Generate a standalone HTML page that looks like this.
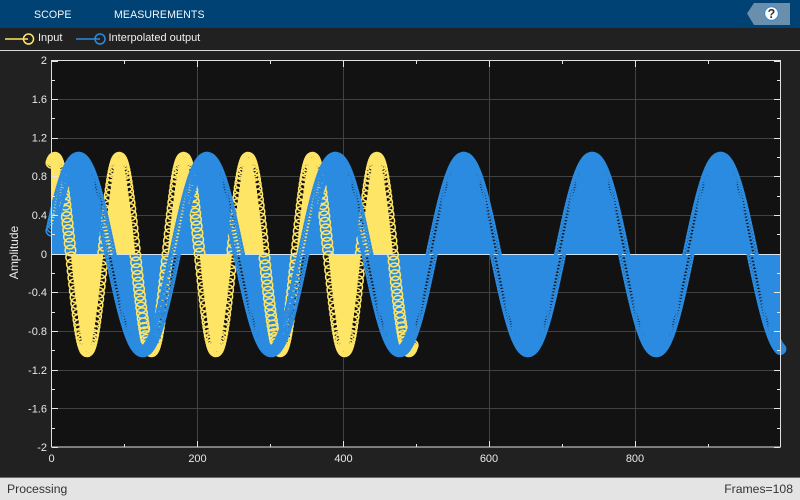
<!DOCTYPE html>
<html lang="en">
<head>
<meta charset="utf-8">
<title>Scope</title>
<style>
html,body{margin:0;padding:0;background:#212121;}
body{width:800px;height:500px;overflow:hidden;position:relative;font-family:"Liberation Sans",sans-serif;}
.top{position:absolute;left:0;top:0;width:800px;height:28px;background:#004274;color:#f2f6fa;font-size:10.6px;}
.top span{position:absolute;top:9px;letter-spacing:.1px;}
.leg{position:absolute;top:32px;color:#f0f0f0;font-size:11px;}
.sep{position:absolute;left:0;top:50px;width:800px;height:1px;background:#d8d8d8;}
.status{position:absolute;left:0;top:477px;width:800px;height:23px;background:#e4e4e4;border-top:1px solid #6a6a6a;box-sizing:border-box;color:#333;font-size:12.2px;}
.status span{position:absolute;top:4px;}
svg{position:absolute;left:0;top:0;}
#data{filter:blur(0.3px);}
</style>
</head>
<body>
<div class="top"><span style="left:34px">SCOPE</span><span style="left:114px">MEASUREMENTS</span></div>
<div class="leg" style="left:38px">Input</div>
<div class="leg" style="left:108.5px">Interpolated output</div>
<div class="sep"></div>
<svg width="800" height="500" viewBox="0 0 800 500" xmlns="http://www.w3.org/2000/svg" font-family="Liberation Sans, sans-serif">
  <polygon points="747,13.5 754,3 790,3 790,25 754,25" fill="#6a8fad"/>
  <circle cx="771.5" cy="13.5" r="6.8" fill="#fff" stroke="#2a8be0" stroke-width="1"/>
  <text x="771.5" y="18" font-size="12.5" font-weight="bold" text-anchor="middle" fill="#333">?</text>

  <path d="M5 39H28" stroke="#ffe566" stroke-width="1.5" fill="none"/>
  <circle cx="28.5" cy="39" r="5" fill="none" stroke="#ffe566" stroke-width="1.5"/>
  <path d="M76 39H100" stroke="#2a8be0" stroke-width="1.5" fill="none"/>
  <circle cx="100" cy="39" r="5" fill="none" stroke="#2a8be0" stroke-width="1.5"/>

  <rect x="51.5" y="60.5" width="729" height="386.5" fill="#121212"/>
  <path id="grid" d="" stroke="#424242" stroke-width="1" fill="none"/>

  <g id="data">
    <path id="ys" d="" stroke="#ffe566" stroke-width="1" fill="none"/>
    <path id="bs" d="" stroke="#2a8be0" stroke-width="1" fill="none"/>
    <path d="M51 254.5H781" stroke="#cfe4f7" stroke-width="1" fill="none"/>
    <path id="yr" d="" stroke="#ffe566" stroke-width="1.5" fill="none"/>
    <path id="br" d="" stroke="#2a8be0" stroke-width="1.6" fill="none"/>
  </g>

  <path id="ticks" d="" stroke="#e6e6e6" stroke-width="1" fill="none"/>
  <rect x="51.5" y="60.5" width="729" height="386.5" fill="none" stroke="#e0e0e0" stroke-width="1"/>

  <g font-size="11" fill="#e8e8e8" text-anchor="end">
    <text x="47" y="64">2</text>
    <text x="47" y="103">1.6</text>
    <text x="47" y="141.5">1.2</text>
    <text x="47" y="180">0.8</text>
    <text x="47" y="219">0.4</text>
    <text x="47" y="258">0</text>
    <text x="47" y="296">-0.4</text>
    <text x="47" y="335">-0.8</text>
    <text x="47" y="374">-1.2</text>
    <text x="47" y="412.5">-1.6</text>
    <text x="47" y="451">-2</text>
  </g>
  <g font-size="11" fill="#e8e8e8" text-anchor="middle">
    <text x="51.5" y="462">0</text>
    <text x="197.5" y="462">200</text>
    <text x="343.5" y="462">400</text>
    <text x="489" y="462">600</text>
    <text x="635" y="462">800</text>
  </g>
  <text transform="translate(18,252.5) rotate(-90)" font-size="12" fill="#e8e8e8" text-anchor="middle">Amplitude</text>
</svg>
<div class="status"><span style="left:7px">Processing</span><span style="right:7px">Frames=108</span></div>
<script>
(function(){
  var X0=51.5,DX=0.7295,Y0=254.5,AMP=96.7,R=5.3;
  function circ(x,y){return 'M'+(x-R).toFixed(2)+' '+y.toFixed(2)+'a'+R+' '+R+' 0 1 0 '+(2*R)+' 0a'+R+' '+R+' 0 1 0 '+(-2*R)+' 0';}
  function series(n,f,sid,rid){
    var s='',r='';
    for(var i=0;i<n;i++){
      var x=X0+i*DX,y=Y0-AMP*f(x);
      s+='M'+x.toFixed(2)+' '+Y0+'V'+y.toFixed(2);
      r+=circ(x,y);
    }
    document.getElementById(sid).setAttribute('d',s);
    document.getElementById(rid).setAttribute('d',r);
  }
  series(496,function(x){return -Math.cos(2*Math.PI*(x-87)/64.4);},'ys','yr');
  series(1000,function(x){return Math.cos(2*Math.PI*(x-78.5)/128.4);},'bs','br');
  var g='',t='',i,p;
  for(i=0;i<=10;i++){
    p=(60.5+i*38.65).toFixed(1);
    p=Math.round(p)+.5;
    if(i>0&&i<10)g+='M52 '+p+'H780';
    t+='M52 '+p+'H58M780 '+p+'H774';
  }
  for(i=0;i<10;i++){
    p=Math.round(60.5+(i+.5)*38.65)+.5;
    t+='M52 '+p+'H55M780 '+p+'H777';
  }
  for(i=1;i<=4;i++){
    p=Math.round(51+i*146)+.5;
    g+='M'+p+' 61V447';
    t+='M'+p+' 61V67M'+p+' 447V441';
  }
  for(i=0;i<5;i++){
    p=Math.round(51+(i+.5)*146)+.5;
    t+='M'+p+' 61V64M'+p+' 447V444';
  }
  document.getElementById('grid').setAttribute('d',g);
  document.getElementById('ticks').setAttribute('d',t);
})();
</script>
</body>
</html>
